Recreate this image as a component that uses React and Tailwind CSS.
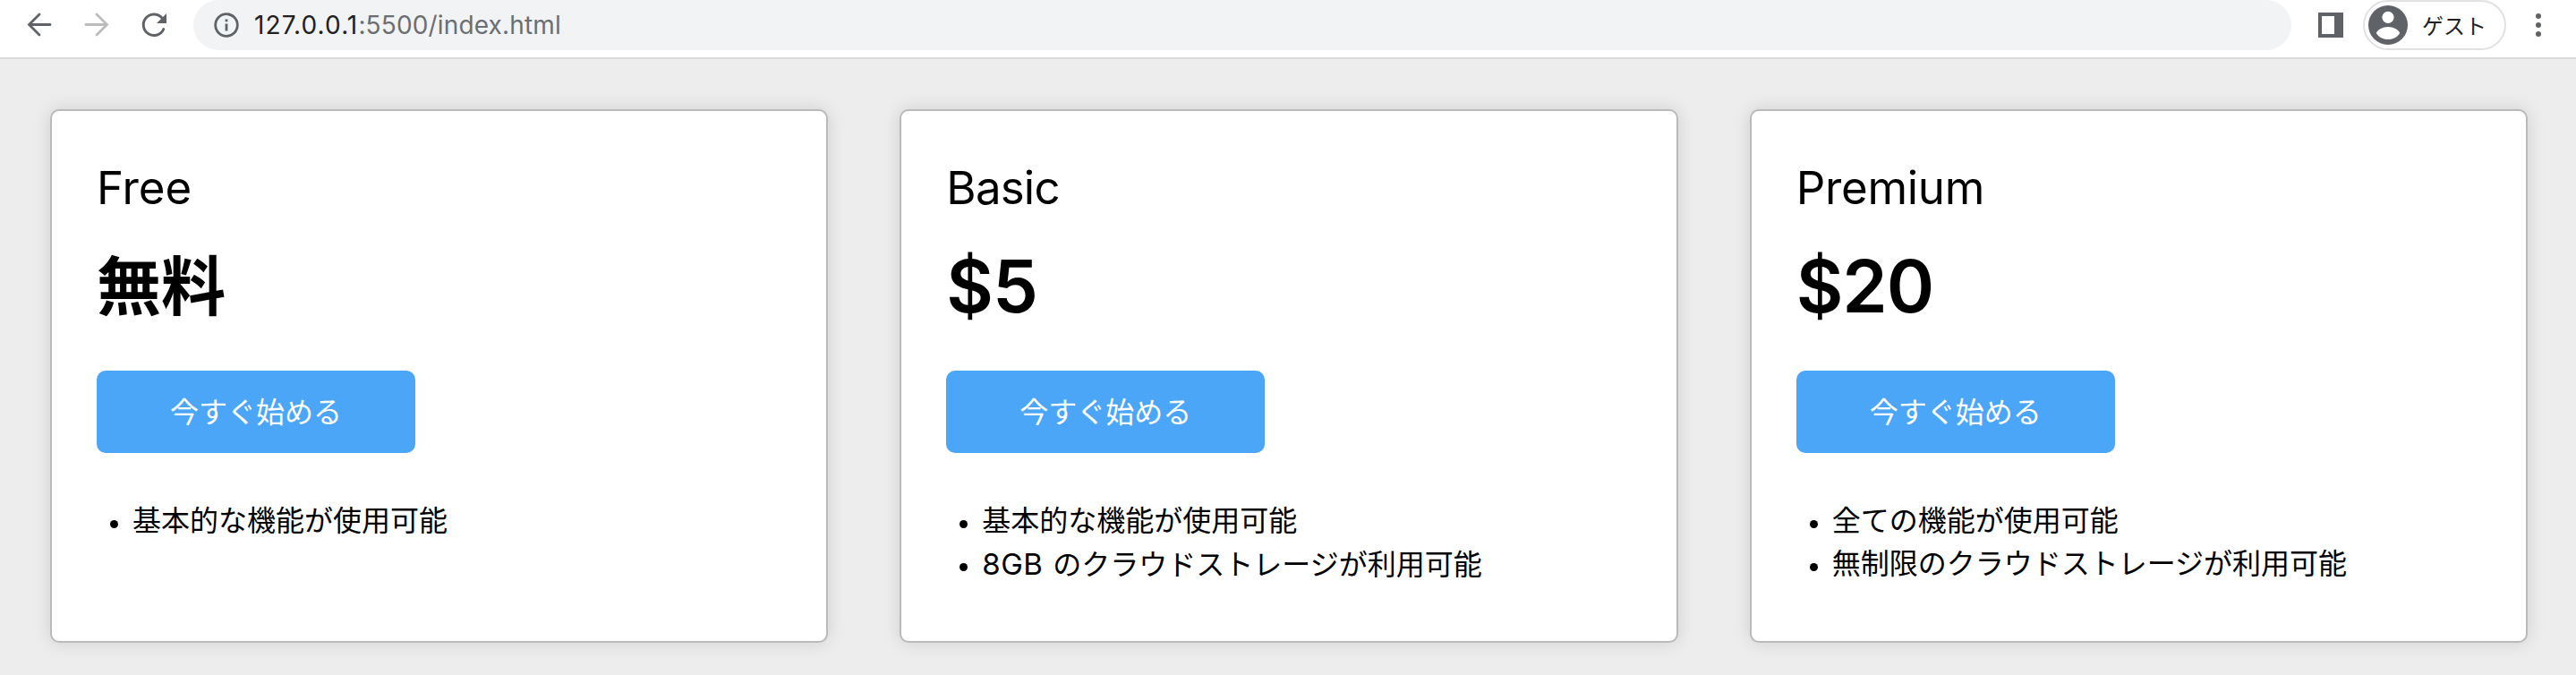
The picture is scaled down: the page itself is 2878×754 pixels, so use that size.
const plans = [
  { name: "Free", nameClass: "tracking-[-0.1px]", price: "無料", priceClass: "text-[72px] font-bold", features: ["基本的な機能が使用可能"] },
  { name: "Basic", nameClass: "tracking-[-0.8px]", price: "$5", priceClass: "text-[81px] font-semibold tracking-[-1px]", features: ["基本的な機能が使用可能", <><span className="inline-block w-[79px] text-[33px] tracking-[0.4px]">8GB </span>のクラウドストレージが利用可能</>] },
  { name: "Premium", nameClass: "tracking-[-0.3px]", price: "$20", priceClass: "text-[81px] font-semibold tracking-[-1px]", features: ["全ての機能が使用可能", "無制限のクラウドストレージが利用可能"] },
];

function Toolbar() {
  return (
    <header className="flex h-[66px] items-start border-b-2 border-[#dadada] bg-white">
      <svg className="h-14 w-[216px] shrink-0" viewBox="0 0 216 56" fill="none">
        <g strokeWidth="2.8" strokeLinecap="round">
          <path d="M56 27.5H33M44 16L32.500 27.500L44 39" stroke="#5f6368" />
          <path d="M96 27.5H119M108 16L119.500 27.500L108 39" stroke="#babcbe" />
          <path d="M182.800 32.500A11.8 11.8 0 1 1 180.5 19.5" stroke="#5f6368" strokeWidth="3" />
        </g>
        <path d="M186 15V26H175Z" fill="#5f6368" />
      </svg>
      <div className="flex h-14 w-[2344px] items-center rounded-full bg-[#f1f3f4] pl-[23px] font-[Inter,sans-serif] text-[28px] leading-none">
        <svg className="mr-[17px] h-7 w-7" viewBox="0 0 28 28" fill="none">
          <circle cx="14" cy="14" r="12.3" stroke="#5f6368" strokeWidth="2.8" />
          <path d="M12.6 12.6h2.8v8h-2.8zM12.6 7.4h2.8v2.8h-2.8z" fill="#5f6368" />
        </svg>
        <span className="tracking-[1.1px] text-[#202124]">127.0.0.1</span>
        <span className="tracking-[0.15px] text-[#6b6e72]">:5500/index.html</span>
      </div>
      <svg className="ml-[30px] mt-[14px] h-7 w-7" viewBox="0 0 28 28">
        <path fillRule="evenodd" d="M0 0H28V28H0ZM4 4V24H18V4Z" fill="#5f6368" />
      </svg>
      <div className="ml-[22px] flex h-14 w-40 items-center rounded-full border-2 border-[#e1e1e2] pl-1">
        <svg className="h-11 w-11" viewBox="0 0 44 44">
          <circle cx="22" cy="22" r="22" fill="#5f6368" />
          <circle cx="22" cy="13.3" r="6.6" fill="#fff" />
          <path d="M8.8 31C10.5 27 16 24 22 24S33.500 27 35.200 31C32.500 35.500 27.500 38 22 38S11.500 35.500 8.800 31Z" fill="#fff" />
        </svg>
        <span className="ml-4 font-['Noto_Sans_CJK_JP',sans-serif] text-2xl leading-none text-[#202124]">ゲスト</span>
      </div>
      <svg className="ml-[33px] h-14 w-1.5" viewBox="0 0 6 56" fill="#5f6368">
        <circle cx="3" cy="18" r="3" />
        <circle cx="3" cy="28" r="3" />
        <circle cx="3" cy="38" r="3" />
      </svg>
    </header>
  );
}

function PlanCard({ plan }) {
  return (
    <section className="h-[596px] flex-1 rounded-[10px] border-2 border-[#bababa] bg-white px-[50px] pt-[50px] shadow-[0_0_20px_rgba(0,0,0,0.13)]">
      <h2 className={`h-[72px] text-[51px] leading-[72px] ${plan.nameClass}`}>{plan.name}</h2>
      <p className={`mt-5 h-[108px] leading-[108px] ${plan.priceClass}`}>{plan.price}</p>
      <button className="mt-10 block h-[92px] w-[356px] rounded-[10px] bg-[#4ca6f8] pb-1 font-['Noto_Sans_CJK_JP',sans-serif] text-[32px] leading-none text-white">今すぐ始める</button>
      <ul className="mt-[52px] text-[32px]">
        {plan.features.map((feature, i) => (
          <li key={i} className="flex h-12 items-center whitespace-nowrap">
            <span className="ml-[15px] mr-[16px] mt-[6px] h-[9px] w-[9px] shrink-0 rounded-full bg-black" />
            <span className="self-start leading-[48px]">{feature}</span>
          </li>
        ))}
      </ul>
    </section>
  );
}

export default function App() {
  return (
    <div lang="ja" className="h-[754px] overflow-hidden bg-[#ededed] font-[Inter,'Noto_Sans_CJK_JP',sans-serif] text-black">
      <Toolbar />
      <main className="flex gap-20 pl-14 pr-[54px] pt-14">
        {plans.map((plan) => (
          <PlanCard key={plan.name} plan={plan} />
        ))}
      </main>
    </div>
  );
}
